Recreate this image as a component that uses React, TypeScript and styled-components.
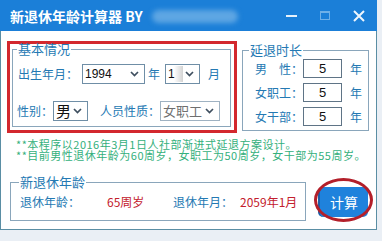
import styled, { createGlobalStyle } from "styled-components";

const GlobalStyle = createGlobalStyle`
  html, body {
    margin: 0;
    padding: 0;
    background: #eaeff5;
  }
  body {
    font-family: "Noto Sans CJK SC", "Liberation Sans", sans-serif;
  }
`;

const Window = styled.div`
  width: 377px;
  height: 230px;
  display: flex;
  flex-direction: column;
`;

const TitleBar = styled.div`
  height: 31px;
  flex: none;
  background: #1b7fd8;
  display: flex;
  align-items: center;
  padding-left: 10px;
  color: #fff;
`;

const Title = styled.span`
  font-size: 14px;
  font-weight: bold;
  line-height: 16px;
  white-space: nowrap;
`;

const Smudge = styled.div`
  width: 86px;
  height: 13px;
  margin-left: 9px;
  margin-top: 2px;
  border-radius: 7px;
  background: #5ea6e3;
  filter: blur(2.5px);
`;

const Controls = styled.div`
  margin-left: auto;
  display: flex;
  height: 100%;
  padding-right: 1px;
`;

const Ctl = styled.div`
  width: 34px;
  display: flex;
  align-items: center;
  justify-content: center;
`;

const Body = styled.div`
  flex: 1;
  background: #fff;
  border: 1px solid #5a8ea4;
  border-top: none;
  display: flex;
  flex-direction: column;
`;

const TopRow = styled.div`
  display: flex;
  align-items: flex-start;
  margin-top: 10px;
`;

const RedFrame = styled.div`
  box-sizing: border-box;
  margin-left: 6px;
  width: 230px;
  height: 92px;
  border: 3px solid #d3282e;
  padding-left: 2px;
`;

const Group = styled.fieldset<{ $w: number; $h: number; $mt?: number; $ml?: number }>`
  box-sizing: border-box;
  width: ${(p) => p.$w}px;
  height: ${(p) => p.$h}px;
  margin: ${(p) => p.$mt ?? 0}px 0 0 ${(p) => p.$ml ?? 0}px;
  padding: 0;
  border: 1px solid #8aa6bb;
  min-width: 0;
`;

const Legend = styled.legend<{ $ml: number }>`
  margin-left: ${(p) => p.$ml}px;
  padding: 0 1px;
  font-size: 13px;
  line-height: 12px;
  color: #2479b3;
`;

const Row = styled.div<{ $mt: number; $ml: number; $h?: number }>`
  display: flex;
  align-items: center;
  height: ${(p) => p.$h ?? 20}px;
  margin: ${(p) => p.$mt}px 0 0 ${(p) => p.$ml}px;
`;

const Label = styled.span<{ $w?: number; $ml?: number; $red?: boolean; $size?: number }>`
  flex: none;
  width: ${(p) => (p.$w ? `${p.$w}px` : "auto")};
  margin-left: ${(p) => p.$ml ?? 0}px;
  font-size: ${(p) => p.$size ?? 12}px;
  line-height: 14px;
  color: ${(p) => (p.$red ? "#c3202c" : "#2479b3")};
  white-space: nowrap;
`;

const Combo = styled.div<{ $w: number; $ml?: number; $muted?: boolean }>`
  box-sizing: border-box;
  flex: none;
  width: ${(p) => p.$w}px;
  height: 20px;
  margin-left: ${(p) => p.$ml ?? 0}px;
  border: 1px solid ${(p) => (p.$muted ? "#9fb2c2" : "#6f8ea6")};
  background: #fff;
  display: flex;
  align-items: center;
  justify-content: space-between;
  padding: 0 5px 0 2px;
`;

const ComboValue = styled.span<{ $size?: number; $muted?: boolean; $focus?: boolean }>`
  font-family: ${(p) => (p.$size ? `"Noto Sans CJK SC", sans-serif` : `"Liberation Sans", sans-serif`)};
  font-size: ${(p) => p.$size ?? 12}px;
  line-height: 16px;
  color: ${(p) => (p.$muted ? "#6f6f6f" : "#111")};
  padding-right: ${(p) => (p.$focus ? 8 : 0)}px;
  background: ${(p) => (p.$focus ? "linear-gradient(90deg, #fff 40%, #d4d4d4)" : "none")};
`;

const NumBox = styled.div`
  box-sizing: border-box;
  flex: none;
  width: 39px;
  height: 19px;
  border: 1px solid #5f7486;
  display: flex;
  align-items: center;
  justify-content: center;
  font-family: "Liberation Sans", sans-serif;
  font-size: 13px;
  color: #111;
`;

const Notes = styled.div`
  margin: 6px 0 0 15px;
  display: flex;
  flex-direction: column;
`;

const NoteLine = styled.div`
  height: 11px;
  font-size: 11px;
  line-height: 11px;
  letter-spacing: 0.5px;
  color: #34b07c;
  white-space: nowrap;
`;

const BottomRow = styled.div`
  display: flex;
  align-items: flex-start;
  margin-top: 15px;
`;

const CalcWrap = styled.div`
  position: relative;
  margin: 11px 0 0 12px;
`;

const CalcButton = styled.button`
  width: 50px;
  height: 30px;
  border: none;
  border-left: 2px solid #1a5fa8;
  border-radius: 5px;
  background: #1f82dc;
  color: #fff;
  font-family: "Noto Sans CJK SC", sans-serif;
  font-size: 14px;
  padding: 0;
`;

const Ring = styled.span`
  position: absolute;
  left: -4px;
  top: -9px;
  width: 59px;
  height: 44px;
  box-sizing: border-box;
  border: 3px solid #b31f2a;
  border-radius: 50%;
  pointer-events: none;
`;

function Chevron() {
  return (
    <svg width="9" height="6" viewBox="0 0 9 6">
      <polyline points="1,1 4.5,4.5 8,1" fill="none" stroke="#3f4f5f" strokeWidth="1.7" />
    </svg>
  );
}

export default function App() {
  return (
    <>
      <GlobalStyle />
      <Window>
        <TitleBar>
          <Title>新退休年龄计算器 BY</Title>
          <Smudge />
          <Controls>
            <Ctl>
              <svg width="11" height="4" viewBox="0 0 11 4">
                <rect x="0" y="1" width="11" height="2" fill="#e6f1fb" />
              </svg>
            </Ctl>
            <Ctl>
              <svg width="10" height="9" viewBox="0 0 10 9">
                <rect x="0.5" y="0.5" width="9" height="8" fill="none" stroke="#6fb0e8" />
                <rect x="0.5" y="0.5" width="9" height="1.5" fill="#6fb0e8" />
              </svg>
            </Ctl>
            <Ctl>
              <svg width="12" height="12" viewBox="0 0 12 12">
                <path d="M1 1 L11 11 M11 1 L1 11" stroke="#eef6fd" strokeWidth="2" />
              </svg>
            </Ctl>
          </Controls>
        </TitleBar>
        <Body>
          <TopRow>
            <RedFrame>
              <Group $w={219} $h={84} $mt={-1}>
                <Legend $ml={4}>基本情况</Legend>
                <Row $mt={9} $ml={5}>
                  <Label $w={60}>出生年月：</Label>
                  <Combo $w={63} $ml={4}>
                    <ComboValue>1994</ComboValue>
                    <Chevron />
                  </Combo>
                  <Label $ml={3}>年</Label>
                  <Combo $w={35} $ml={5}>
                    <ComboValue $focus>1</ComboValue>
                    <Chevron />
                  </Combo>
                  <Label $ml={8}>月</Label>
                </Row>
                <Row $mt={17} $ml={4}>
                  <Label $w={36}>性别：</Label>
                  <Combo $w={35}>
                    <ComboValue $size={15}>男</ComboValue>
                    <Chevron />
                  </Combo>
                  <Label $w={60} $ml={12}>人员性质：</Label>
                  <Combo $w={60} $muted>
                    <ComboValue $size={13} $muted>女职工</ComboValue>
                    <Chevron />
                  </Combo>
                </Row>
              </Group>
            </RedFrame>
            <Group $w={127} $h={87} $mt={3} $ml={5}>
              <Legend $ml={6}>延退时长</Legend>
              <Row $mt={3} $ml={12} $h={19}>
                <Label $w={48}>男　性：</Label>
                <NumBox>5</NumBox>
                <Label $ml={8}>年</Label>
              </Row>
              <Row $mt={5} $ml={12} $h={19}>
                <Label $w={48}>女职工：</Label>
                <NumBox>5</NumBox>
                <Label $ml={8}>年</Label>
              </Row>
              <Row $mt={5} $ml={12} $h={19}>
                <Label $w={48}>女干部：</Label>
                <NumBox>5</NumBox>
                <Label $ml={8}>年</Label>
              </Row>
            </Group>
          </TopRow>
          <Notes>
            <NoteLine>**本程序以2016年3月1日人社部渐进式延退方案设计。</NoteLine>
            <NoteLine>**目前男性退休年龄为60周岁，女职工为50周岁，女干部为55周岁。</NoteLine>
          </Notes>
          <BottomRow>
            <Group $w={296} $h={45} $ml={9}>
              <Legend $ml={8}>新退休年龄</Legend>
              <Row $mt={5} $ml={9} $h={18}>
                <Label $w={87}>退休年龄：</Label>
                <Label $w={66} $red>65周岁</Label>
                <Label $w={67}>退休年月：</Label>
                <Label $red>2059年1月</Label>
              </Row>
            </Group>
            <CalcWrap>
              <CalcButton>计算</CalcButton>
              <Ring />
            </CalcWrap>
          </BottomRow>
        </Body>
      </Window>
    </>
  );
}
